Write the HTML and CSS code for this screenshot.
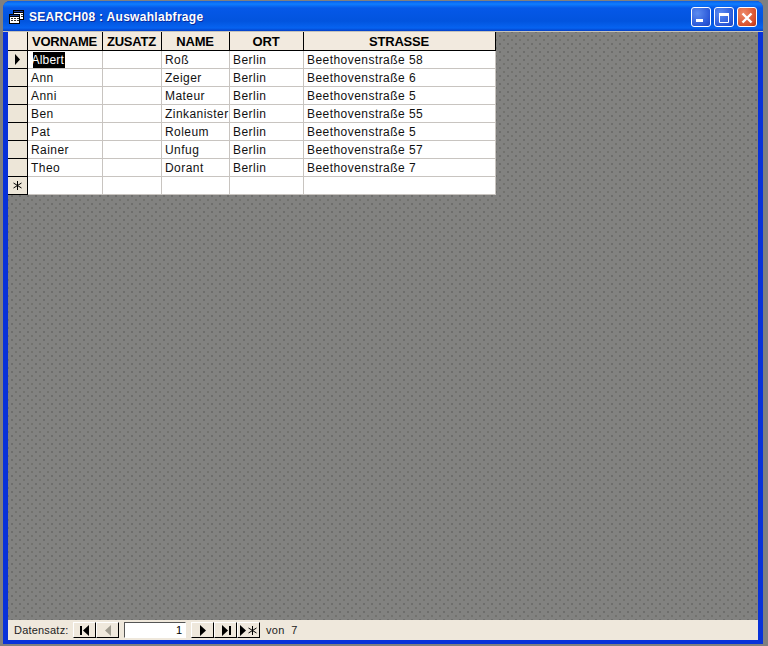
FILE: index.html
```html
<!DOCTYPE html>
<html lang="de">
<head>
<meta charset="utf-8">
<title>SEARCH08 : Auswahlabfrage</title>
<link rel="stylesheet" href="styles.css">
</head>
<body>
<div class="window">
  <header class="titlebar">
    <svg class="app-icon" width="15" height="14" viewBox="0 0 15 14">
      <rect x="4.500" y="0.500" width="10" height="9" fill="#fff" stroke="#000"/>
      <rect x="4.500" y="0.500" width="10" height="2" fill="#1c3f9e" stroke="#000"/>
      <rect x="0.500" y="4.500" width="10" height="9" fill="#fff" stroke="#000"/>
      <rect x="0.500" y="4.500" width="10" height="2" fill="#1c3f9e" stroke="#000"/>
      <path d="M2 8.500h2M5 8.500h2M8 8.500h2M2 10.500h2M5 10.500h2M8 10.500h2" stroke="#333"/>
      <path d="M12 4.500h2M12 6.500h2" stroke="#333"/>
    </svg>
    <span class="title">SEARCH08 : Auswahlabfrage</span>
    <div class="controls">
      <button class="ctl"><svg width="21" height="21" viewBox="0 0 21 21"><rect x="5" y="12" width="7" height="3" fill="#fff"/></svg></button>
      <button class="ctl"><svg width="21" height="21" viewBox="0 0 21 21"><path d="M5.500 6.500h9v9h-9z" fill="none" stroke="#fff"/><rect x="5" y="6" width="10" height="3" fill="#fff"/></svg></button>
      <button class="ctl close"><svg width="21" height="21" viewBox="0 0 21 21"><path d="M5.500 6.500l9 9M14.500 6.500l-9 9" stroke="#fff" stroke-width="2.400" fill="none"/></svg></button>
    </div>
  </header>
  <main class="client">
    <table class="sheet">
      <colgroup><col class="c0"><col class="c1"><col class="c2"><col class="c3"><col class="c4"><col class="c5"></colgroup>
      <thead>
        <tr><th class="sel"></th><th>VORNAME</th><th>ZUSATZ</th><th>NAME</th><th>ORT</th><th>STRASSE</th></tr>
      </thead>
      <tbody>
        <tr><th class="sel"><svg width="7" height="11" viewBox="0 0 7 11"><path d="M1 0l5 5.500-5 5.500z"/></svg></th><td><span class="hl">Albert</span></td><td></td><td>Roß</td><td>Berlin</td><td>Beethovenstraße 58</td></tr>
        <tr><th class="sel"></th><td>Ann</td><td></td><td>Zeiger</td><td>Berlin</td><td>Beethovenstraße 6</td></tr>
        <tr><th class="sel"></th><td>Anni</td><td></td><td>Mateur</td><td>Berlin</td><td>Beethovenstraße 5</td></tr>
        <tr><th class="sel"></th><td>Ben</td><td></td><td>Zinkanister</td><td>Berlin</td><td>Beethovenstraße 55</td></tr>
        <tr><th class="sel"></th><td>Pat</td><td></td><td>Roleum</td><td>Berlin</td><td>Beethovenstraße 5</td></tr>
        <tr><th class="sel"></th><td>Rainer</td><td></td><td>Unfug</td><td>Berlin</td><td>Beethovenstraße 57</td></tr>
        <tr><th class="sel"></th><td>Theo</td><td></td><td>Dorant</td><td>Berlin</td><td>Beethovenstraße 7</td></tr>
        <tr><th class="sel"><svg width="11" height="11" viewBox="0 0 11 11"><path d="M5.500 1v9M1.500 3l8 5M9.500 3l-8 5" stroke="#000" fill="none"/></svg></th><td></td><td></td><td></td><td></td><td></td></tr>
      </tbody>
    </table>
  </main>
  <footer class="navbar">
    <span class="nav-label">Datensatz:</span>
    <div class="nav-group">
      <button class="nav-btn"><svg width="12" height="11" viewBox="0 0 12 11"><path d="M1 1h2v9H1zM10 0v11L4 5.500z"/></svg></button>
      <button class="nav-btn"><svg width="12" height="11" viewBox="0 0 12 11"><path d="M9 0v11L3 5.500z" fill="#a09c90"/></svg></button>
    </div>
    <div class="nav-input">1</div>
    <div class="nav-group">
      <button class="nav-btn"><svg width="12" height="11" viewBox="0 0 12 11"><path d="M3 0v11l6-5.500z"/></svg></button>
      <button class="nav-btn"><svg width="12" height="11" viewBox="0 0 12 11"><path d="M2 0v11l6-5.500zM9 1h2v9H9z"/></svg></button>
      <button class="nav-btn"><svg width="20" height="11" viewBox="0 0 20 11"><path d="M1 0v11l6-5.500z"/><path d="M13.500 1v9M9.500 3l8 5M17.500 3l-8 5" stroke="#000" fill="none"/></svg></button>
    </div>
    <span class="nav-total">von&nbsp; 7</span>
  </footer>
</div>
</body>
</html>
```
FILE: styles.css
```css
* { box-sizing: border-box; }
html, body { margin: 0; height: 100%; }
body {
  width: 768px;
  height: 646px;
  background: #808080;
  overflow: hidden;
  font-family: "Liberation Sans", Arial, sans-serif;
}
.window {
  width: 760px;
  height: 643px;
  margin: 1px 3px 0;
  display: flex;
  flex-direction: column;
  background: #0831d9;
  border-radius: 7px 7px 0 0;
  padding: 0 5px 4px;
}
.titlebar {
  flex: none;
  height: 31px;
  margin: 0 -5px;
  padding: 0 6px 0 6px;
  display: flex;
  align-items: center;
  border-radius: 7px 7px 0 0;
  border-bottom: 1px solid #c4c2bc;
  background: linear-gradient(#0a5fe6 0, #0f7dff 3px, #0558e8 7px, #0254de 20px, #0663f0 27px, #0440c8 30px);
}
.app-icon { flex: none; margin-top: 2px; }
.title {
  margin: 2px 0 0 5px;
  color: #fff;
  font: bold 12px "Liberation Sans", Arial, sans-serif;
  letter-spacing: 0.3px;
  text-shadow: 1px 1px 0 #0a2a9c;
}
.controls {
  margin: 2px 0 0 auto;
  display: flex;
  gap: 3px;
}
.ctl {
  width: 20px;
  height: 20px;
  padding: 0;
  display: block;
  border: 1px solid #fff;
  border-radius: 3px;
  background: radial-gradient(circle at 30% 30%, #5c8cf0, #2a58d8 70%, #1c44c0);
  overflow: hidden;
}
.ctl svg { display: block; margin: -1px; }
.close { background: radial-gradient(circle at 30% 30%, #ee8a68, #d8502c 70%, #b83010); }
.client {
  flex: 1;
  min-height: 0;
  background-color: #828280;
  background-image:
    radial-gradient(circle, #6e6e6c 0.8px, transparent 1.1px),
    radial-gradient(circle, #72726e 0.8px, transparent 1.1px);
  background-size: 8px 8px;
  background-position: 0 0, 4px 4px;
}
.sheet {
  border-collapse: collapse;
  table-layout: fixed;
  width: 487px;
  background: #fff;
  font-size: 12px;
  border-right: 1px solid #c8c4c0;
  border-bottom: 1px solid #c8c4c0;
}
.c0 { width: 19px; }
.c1 { width: 75px; }
.c2 { width: 59px; }
.c3 { width: 68px; }
.c4 { width: 74px; }
.c5 { width: 192px; }
.sheet tr { height: 18px; }
.sheet thead th {
  padding: 1px 0 0;
  background: #f2eadf;
  border-right: 1px solid #000;
  border-bottom: 1px solid #000;
  font-size: 13px;
  letter-spacing: -0.2px;
  font-weight: bold;
  text-align: center;
  color: #000;
  white-space: nowrap;
  overflow: hidden;
}
.sheet td {
  padding: 2px 0 0 3.5px;
  border-right: 1px solid #c8c4c0;
  border-bottom: 1px solid #c8c4c0;
  font-size: 12px;
  letter-spacing: 0.45px;
  color: #111;
  white-space: nowrap;
  overflow: hidden;
}
.sheet tbody th.sel {
  padding: 0;
  background: #ede6d8;
  border-right: 1px solid #000;
  border-bottom: 1px solid #000;
  text-align: center;
  line-height: 0;
}
.sel svg { vertical-align: middle; }
.hl {
  display: inline-block;
  width: 32px;
  height: 16px;
  margin: -1px 0 0 1.5px;
  text-indent: -1px;
  vertical-align: top;
  background: #000;
  color: #fff;
  line-height: 17px;
  letter-spacing: 0.2px;
}
.navbar {
  flex: none;
  height: 20px;
  padding-left: 6px;
  display: flex;
  align-items: center;
  background: #efe8dc;
  font-size: 11px;
  color: #222;
}
.nav-label { width: 59px; letter-spacing: 0.2px; }
.nav-group { display: flex; }
.nav-btn {
  height: 16px;
  width: 23px;
  padding: 0;
  display: flex;
  align-items: center;
  justify-content: center;
  background: #efe8dc;
  border: 1px solid;
  border-color: #fff #000 #000 #fff;
}
.nav-input {
  width: 62px;
  height: 16px;
  margin: 0 5px;
  padding-right: 3px;
  background: #fff;
  border: 1px solid;
  border-color: #555 #fff #fff #555;
  color: #000;
  text-align: right;
  line-height: 15px;
}
.nav-total { margin-left: 6px; letter-spacing: 0.3px; }
```
